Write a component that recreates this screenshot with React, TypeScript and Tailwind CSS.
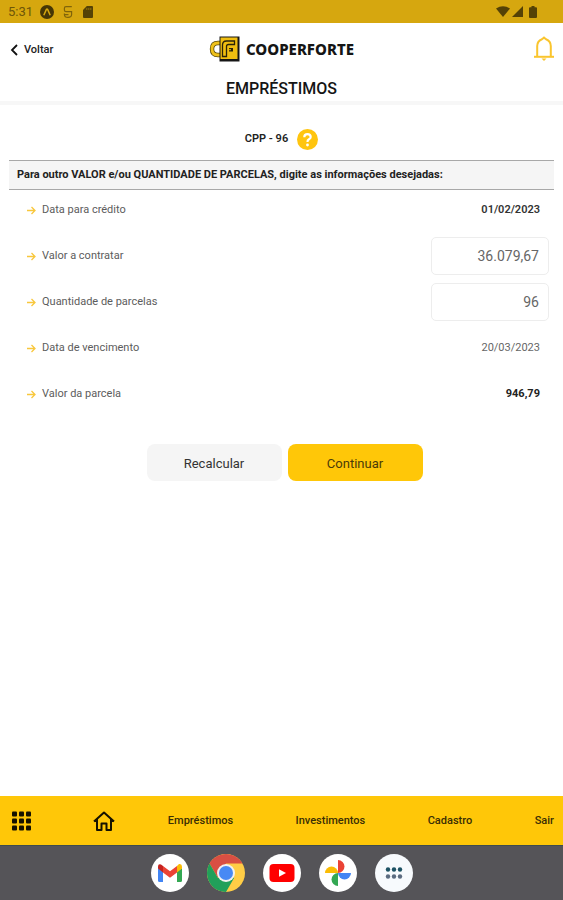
import type { ReactNode } from "react";

function StatusBar() {
  return (
    <div className="flex h-[23px] shrink-0 items-center bg-[#d6a70f] pr-[26px] pl-2 text-[#554206]">
      <span className="w-[32px] text-[13px] leading-4 text-[#6e5608]">5:31</span>
      <svg className="h-[14px] w-[14px]" viewBox="0 0 14 14" aria-hidden="true">
        <circle cx="7" cy="7" r="7" fill="#453606" />
        <path d="M3.800 10.200 6.400 4.400q.6-1 1.200 0l2.600 5.800" fill="none" stroke="#d6a70f" strokeWidth="1.500" />
      </svg>
      <svg className="ml-[9px] h-[14px] w-[10px]" viewBox="0 0 10 14" fill="none" stroke="#80640a" strokeWidth="1.200" aria-hidden="true">
        <path d="M8.800 1.600H3Q1.400 1.600 1.400 3.200V5Q1.400 6.600 3 6.600H8.600V9.600Q8.600 12.400 5 12.400T1.400 9.600H5.500M1.400 9.600V8.600" />
      </svg>
      <svg className="ml-[10px] h-3 w-[10px]" viewBox="0 0 10 12" aria-hidden="true">
        <path d="M3.800 0H9q1 0 1 1v10q0 1-1 1H1q-1 0-1-1V4z" fill="#554206" />
        <path d="M3.800 2v2M5.800 2v2M7.800 2v2" stroke="#a37f0b" strokeWidth=".8" />
      </svg>
      <svg className="ml-auto h-[11px] w-[14px]" viewBox="0 0 14 11" fill="currentColor" aria-hidden="true">
        <path d="M0 2.600Q7-2.300 14 2.600L7 11z" />
      </svg>
      <svg className="ml-[2px] h-[11px] w-[11px]" viewBox="0 0 11 11" fill="currentColor" aria-hidden="true">
        <path d="M11 0v11H0z" />
      </svg>
      <svg className="ml-[6px] h-3 w-2" viewBox="0 0 8 12" fill="currentColor" aria-hidden="true">
        <path d="M2.500 0h3v1.200H7q1 0 1 1V11q0 1-1 1H1q-1 0-1-1V2.200q0-1 1-1h1.500z" />
      </svg>
    </div>
  );
}

function Logo() {
  return (
    <div className="flex items-center gap-[6px]">
      <svg className="h-[26px] w-[31px]" viewBox="0 0 31 26" aria-hidden="true">
        <path d="M11 7H9Q3 7 3 13T9 19H11" fill="none" stroke="#5a4a0c" strokeWidth="4.400" />
        <path d="M11 7H9Q3 7 3 13T9 19H11" fill="none" stroke="#efc11a" strokeWidth="2.800" />
        <path d="M10.500 .5H30.500V25.500H10.500z" fill="#161616" />
        <path d="M11.500 1.500H28.500V23H11.500z" fill="#f0be10" />
        <path d="M13.500 20.500V9Q13.500 5 17.500 5H25.500V8.500H19.500Q17.500 8.500 17.500 10.500V20.500z" fill="#f0be10" stroke="#2b2408" strokeWidth="1.300" />
        <path d="M20 12H24V15.500H20z" fill="#2b2408" />
        <path d="M20 13.700H22" stroke="#f0be10" />
      </svg>
      <span className="font-['Noto_Sans',sans-serif] text-[15px] leading-5 font-extrabold text-[#151515]">COOPERFORTE</span>
    </div>
  );
}

function Header() {
  return (
    <header className="border-b-4 border-[#f7f7f7] px-[9px] pt-[13px] pb-[2px]">
      <div className="grid grid-cols-[1fr_auto_1fr] items-center">
        <button type="button" className="flex items-center gap-[5px] justify-self-start pt-[2px] text-[11px] leading-4 font-medium text-[#222]">
          <svg className="h-3 w-[10px]" viewBox="0 0 10 12" fill="none" stroke="#111" strokeWidth="1.800" aria-hidden="true">
            <path d="M8 1 3 6l5 5" />
          </svg>
          Voltar
        </button>
        <Logo />
        <button type="button" aria-label="Notificações" className="justify-self-end">
          <svg className="block h-[26px] w-5" viewBox="0 0 20 26" fill="none" stroke="#fac52e" aria-hidden="true">
            <path d="M3.200 20V10Q3.200 5 8 3.200L10 1.600l2 1.600Q16.800 5 16.800 10V20" strokeWidth="2" />
            <path d="M0 20.800H20" strokeWidth="2" />
            <path d="M7.500 22.500h5L10 25z" fill="#fac52e" stroke="none" />
          </svg>
        </button>
      </div>
      <h1 className="mt-[17px] text-center text-base leading-5 font-medium text-[#151515]">EMPRÉSTIMOS</h1>
    </header>
  );
}

function Arrow() {
  return (
    <svg className="mr-[6px] h-[9px] w-[9px]" viewBox="0 0 9 9" fill="none" stroke="#f8c73c" strokeWidth="1.300" aria-hidden="true">
      <path d="M0 4.500H8M4.500 1 8 4.500 4.500 8" />
    </svg>
  );
}

function Row({ label, htmlFor, children }: { label: string; htmlFor?: string; children: ReactNode }) {
  const text = "flex items-center text-[11px] leading-4 text-[#5c5c5c]";
  return (
    <div className="flex h-[38px] items-center justify-between">
      {htmlFor ? (
        <label htmlFor={htmlFor} className={text}><Arrow />{label}</label>
      ) : (
        <span className={text}><Arrow />{label}</span>
      )}
      {children}
    </div>
  );
}

const field = "h-[38px] w-[118px] rounded-[5px] border border-[#ededed] bg-white pr-[9px] text-right text-sm text-[#666] outline-none";
const value = "mr-[9px] text-[11px] leading-4";

function LoanForm() {
  return (
    <form className="flex flex-col" onSubmit={(e) => e.preventDefault()}>
      <div className="mx-[9px] flex h-[30px] items-center border-y border-[#a8a8a8] bg-[#f5f5f5] px-2 text-[11px] leading-4 font-bold text-[#222]">
        Para outro VALOR e/ou QUANTIDADE DE PARCELAS, digite as informações desejadas:
      </div>
      <div className="flex flex-col gap-2 pt-[1px] pr-[14px] pl-[27px]">
        <Row label="Data para crédito"><span className={`${value} font-semibold text-[#333]`}>01/02/2023</span></Row>
        <Row label="Valor a contratar" htmlFor="valor"><input id="valor" className={field} defaultValue="36.079,67" /></Row>
        <Row label="Quantidade de parcelas" htmlFor="parcelas"><input id="parcelas" className={field} defaultValue="96" /></Row>
        <Row label="Data de vencimento"><span className={`${value} text-[#666]`}>20/03/2023</span></Row>
        <Row label="Valor da parcela"><span className={`${value} font-bold text-[#222]`}>946,79</span></Row>
      </div>
      <div className="mt-[31px] flex justify-center gap-[6px] pl-[6px] text-[13px] leading-5">
        <button type="button" className="h-[37px] w-[135px] rounded-lg bg-[#f5f5f5] pt-[2px] text-[#333]">Recalcular</button>
        <button type="submit" className="h-[37px] w-[135px] rounded-lg bg-[#ffc708] pt-[2px] text-[#4a3b08]">Continuar</button>
      </div>
    </form>
  );
}

function BottomNav() {
  return (
    <nav className="flex h-[49px] shrink-0 items-center justify-between bg-[#ffc708] pr-[9px] pl-3 text-[11px] leading-4 font-medium text-[#3a2e05]">
      <button type="button" aria-label="Menu">
        <svg className="block h-5 w-[19px]" viewBox="0 0 19 20" fill="#161200" aria-hidden="true">
          {[0, 7, 14].map((y) =>
            [0, 7, 14].map((x) => <rect key={`${x}-${y}`} x={x} y={y + 0.5} width="5" height="5" rx="1" />)
          )}
        </svg>
      </button>
      <a href="#inicio" aria-label="Início" className="-mr-[10px]">
        <svg className="block h-5 w-[22px]" viewBox="0 0 22 20" fill="none" stroke="#161200" strokeWidth="2" strokeLinejoin="round" aria-hidden="true">
          <path d="M1 10.500 11 1.500 21 10.500M4 8.500V19H8.500V12.500H13.500V19H18V8.500" />
        </svg>
      </a>
      <a href="#emprestimos">Empréstimos</a>
      <a href="#investimentos">Investimentos</a>
      <a href="#cadastro">Cadastro</a>
      <a href="#sair">Sair</a>
    </nav>
  );
}

function Dock() {
  return (
    <div className="flex h-[55px] shrink-0 items-center justify-center gap-[18px] border-t border-[#3d4c4e] bg-[#555458]">
      <button type="button" aria-label="Gmail">
        <svg className="block h-[38px] w-[38px]" viewBox="0 0 38 38" aria-hidden="true">
          <circle cx="19" cy="19" r="19" fill="#fff" />
          <path d="M7 14V26.500Q7 28 8.500 28H12V17.500z" fill="#4285f4" />
          <path d="M26 17.500V28h3.500q1.500 0 1.500-1.500V14z" fill="#34a853" />
          <path d="M26 12v6.500l5-4V12.500q0-3-3-2.500z" fill="#fbbc04" />
          <path d="M12 12v6.500l7 5.200 7-5.200V12l-7 5.200z" fill="#ea4335" />
          <path d="M7 12.500v2l5 4V12l-2-1.500Q7 9.500 7 12.500z" fill="#c5221f" />
        </svg>
      </button>
      <button type="button" aria-label="Chrome">
        <svg className="block h-[38px] w-[38px]" viewBox="0 0 38 38" aria-hidden="true">
          <circle cx="19" cy="19" r="19" fill="#ffcd46" />
          <path d="M2.550 9.500A19 19 0 0 1 35.450 9.500H19L10.800 23.800z" fill="#d94f43" />
          <path d="M2.550 9.500A19 19 0 0 0 19 38L27.200 23.800H10.800z" fill="#21a05a" />
          <circle cx="19" cy="19" r="9" fill="#f1f1f1" />
          <circle cx="19" cy="19" r="7" fill="#4789f4" />
        </svg>
      </button>
      <button type="button" aria-label="YouTube">
        <svg className="block h-[38px] w-[38px]" viewBox="0 0 38 38" aria-hidden="true">
          <circle cx="19" cy="19" r="19" fill="#fff" />
          <rect x="6.500" y="10" width="25" height="18" rx="4" fill="#f00" />
          <path d="M16 15.200v7.600l7-3.800z" fill="#fff" />
        </svg>
      </button>
      <button type="button" aria-label="Fotos">
        <svg className="block h-[38px] w-[38px]" viewBox="0 0 38 38" aria-hidden="true">
          <circle cx="19" cy="19" r="19" fill="#fff" />
          <path d="M19 6a6.500 6.500 0 0 1 0 13z" fill="#ea4335" />
          <path d="M32 19a6.500 6.500 0 0 1-13 0z" fill="#4285f4" />
          <path d="M19 32a6.500 6.500 0 0 1 0-13z" fill="#34a853" />
          <path d="M6 19a6.500 6.500 0 0 1 13 0z" fill="#fbbc04" />
        </svg>
      </button>
      <button type="button" aria-label="Aplicativos">
        <svg className="block h-[38px] w-[38px]" viewBox="0 0 38 38" aria-hidden="true">
          <circle cx="19" cy="19" r="19" fill="#f7fafd" />
          {[13, 19, 25].map((x) => (
            <g key={x}>
              <circle cx={x} cy="15.500" r="2.200" fill="#1d5264" />
              <circle cx={x} cy="22.500" r="2.200" fill="#5b6b80" />
            </g>
          ))}
        </svg>
      </button>
    </div>
  );
}

export default function App() {
  return (
    <div className="flex min-h-screen flex-col bg-white font-[Roboto,sans-serif]">
      <StatusBar />
      <Header />
      <main className="grow">
        <div className="flex h-[55px] items-center justify-center gap-[9px] pt-[13px] text-[11px] leading-4 font-semibold text-[#222]">
          CPP - 96
          <button type="button" aria-label="Ajuda">
            <svg className="block h-[21px] w-[21px]" viewBox="0 0 21 21" aria-hidden="true">
              <circle cx="10.500" cy="10.500" r="10.500" fill="#ffc50f" />
              <path d="M7.300 8.200Q7.300 5.200 10.500 5.200T13.700 8Q13.700 9.400 12 10.300T10.500 13" fill="none" stroke="#fff" strokeWidth="2.200" />
              <circle cx="10.500" cy="16" r="1.400" fill="#fff" />
            </svg>
          </button>
        </div>
        <LoanForm />
      </main>
      <BottomNav />
      <Dock />
    </div>
  );
}
